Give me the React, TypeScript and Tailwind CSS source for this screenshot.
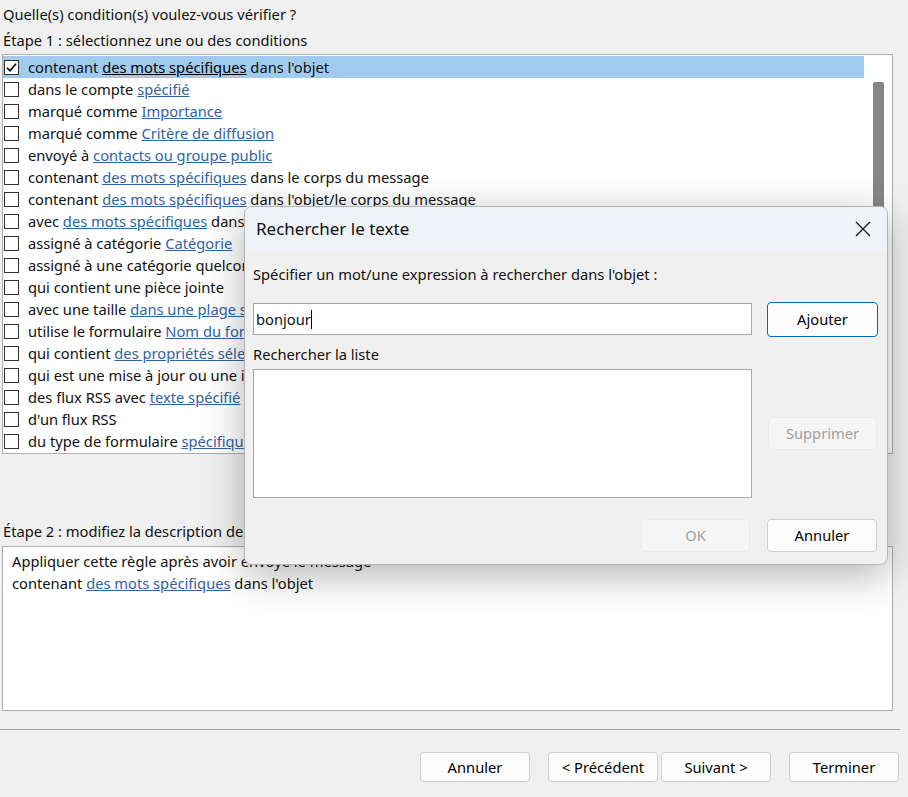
import React from "react";

type Part = string | { link: string };

const conditions: Part[][] = [
  ["contenant ", { link: "des mots spécifiques" }, " dans l'objet"],
  ["dans le compte ", { link: "spécifié" }],
  ["marqué comme ", { link: "Importance" }],
  ["marqué comme ", { link: "Critère de diffusion" }],
  ["envoyé à ", { link: "contacts ou groupe public" }],
  ["contenant ", { link: "des mots spécifiques" }, " dans le corps du message"],
  ["contenant ", { link: "des mots spécifiques" }, " dans l'objet/le corps du message"],
  ["avec ", { link: "des mots spécifiques" }, " dans l'en-tête du message"],
  ["assigné à catégorie ", { link: "Catégorie" }],
  ["assigné à une catégorie quelconque"],
  ["qui contient une pièce jointe"],
  ["avec une taille ", { link: "dans une plage spécifiée" }],
  ["utilise le formulaire ", { link: "Nom du formulaire" }],
  ["qui contient ", { link: "des propriétés sélectionnées" }, " du document"],
  ["qui est une mise à jour ou une invitation à une réunion"],
  ["des flux RSS avec ", { link: "texte spécifié" }, " dans le titre"],
  ["d'un flux RSS"],
  ["du type de formulaire ", { link: "spécifique" }],
];

function Text({ parts, selected }: { parts: Part[]; selected?: boolean }) {
  return (
    <>
      {parts.map((p, i) =>
        typeof p === "string" ? (
          <span key={i}>{p}</span>
        ) : (
          <span
            key={i}
            className={selected ? "underline text-black" : "underline text-[#3063a3]"}
          >
            {p.link}
          </span>
        )
      )}
    </>
  );
}

function ConditionRow({ parts, selected }: { parts: Part[]; selected?: boolean }) {
  return (
    <div
      className={
        "h-[22px] flex items-center whitespace-nowrap " +
        (selected ? "bg-[#a0cbef]" : "")
      }
    >
      <div className="ml-[1px] w-[15px] h-[15px] border border-[#333] bg-white flex items-center justify-center shrink-0">
        {selected && (
          <svg width="13" height="13" viewBox="0 0 13 13">
            <path d="M2 6.8 L5 9.8 L11 2.8" fill="none" stroke="#000" strokeWidth="1.6" />
          </svg>
        )}
      </div>
      <span className="ml-[9px]">
        <Text parts={parts} selected={selected} />
      </span>
    </div>
  );
}

function WinButton({
  children,
  className = "",
  disabled,
  focused,
}: {
  children: React.ReactNode;
  className?: string;
  disabled?: boolean;
  focused?: boolean;
}) {
  const tone = disabled
    ? "bg-[#f5f5f5] border-[#ebebeb] text-[#a0a0a0]"
    : focused
    ? "bg-[#fdfdfd] border-[#0067c0] text-black"
    : "bg-[#fdfdfd] border-[#d0d0d0] text-black";
  return (
    <div
      className={
        "flex items-center justify-center rounded-[4px] border shrink-0 " + tone + " " + className
      }
    >
      {children}
    </div>
  );
}

function SearchDialog() {
  return (
    <div className="absolute left-[244px] top-[206px] w-[644px] h-[359px] rounded-[8px] border border-[#b4b4b4] bg-[#f0f0f0] shadow-[0_10px_40px_rgba(0,0,0,0.30)] overflow-hidden">
      <div className="h-[44px] bg-[#eff3f8] flex items-center justify-between pl-[11px] pr-[16px]">
        <span className="text-[17px]">Rechercher le texte</span>
        <svg width="16" height="16" viewBox="0 0 16 16">
          <path d="M1 1 L15 15 M15 1 L1 15" stroke="#1a1a1a" strokeWidth="1.3" fill="none" />
        </svg>
      </div>
      <div className="pl-[8px] pt-[12px]">
        <div className="h-[22px] leading-[22px]">
          Spécifier un mot/une expression à rechercher dans l'objet :
        </div>
        <div className="mt-[17px] flex items-start">
          <div className="mt-[1px] w-[499px] h-[32px] bg-white border border-[#a8a8a8] flex items-center pl-[2px]">
            <span>bonjour</span>
            <span className="w-px h-[19px] bg-black" />
          </div>
          <WinButton focused className="ml-[15px] w-[111px] h-[35px]">
            Ajouter
          </WinButton>
        </div>
        <div className="mt-[6px] h-[22px] leading-[22px]">Rechercher la liste</div>
        <div className="mt-[4px] flex items-center">
          <div className="w-[499px] h-[129px] bg-white border border-[#a8a8a8]" />
          <WinButton disabled className="ml-[16px] w-[109px] h-[33px]">
            Supprimer
          </WinButton>
        </div>
        <div className="mt-[21px] flex">
          <WinButton disabled className="ml-[388px] w-[109px] h-[33px]">
            OK
          </WinButton>
          <WinButton className="ml-[17px] w-[110px] h-[33px]">Annuler</WinButton>
        </div>
      </div>
    </div>
  );
}

export default function App() {
  return (
    <div
      className="relative w-[908px] h-[797px] overflow-hidden bg-[#f0f0f0] text-[14.7px] text-[#111]"
      style={{ fontFamily: '"Noto Sans", "Open Sans", sans-serif' }}
    >
      <div className="pt-[3px]">
        <p className="h-[22px] leading-[22px] pl-[3px]">
          Quelle(s) condition(s) voulez-vous vérifier ?
        </p>
        <p className="mt-[4px] h-[22px] leading-[22px] pl-[3px]">
          Étape 1 : sélectionnez une ou des conditions
        </p>

        <div className="mt-[3px] ml-[2px] w-[891px] h-[400px] bg-white border border-[#adadad] flex overflow-hidden">
          <div className="w-[861px] pt-[1px] overflow-hidden">
            {conditions.map((c, i) => (
              <ConditionRow key={i} parts={c} selected={i === 0} />
            ))}
          </div>
          <div className="flex-1 flex justify-center pt-[27px]">
            <div className="w-[11px] h-[260px] bg-[#868686] rounded-[2px]" />
          </div>
        </div>

        <p className="mt-[66px] h-[22px] leading-[22px] pl-[3px]">
          Étape 2 : modifiez la description de la règle (cliquez sur une valeur soulignée)
        </p>
        <div className="mt-[4px] ml-[2px] w-[891px] h-[165px] bg-white border border-[#adadad] pt-[3px] pl-[9px]">
          <div className="h-[22px] leading-[22px]">
            Appliquer cette règle après avoir envoyé le message
          </div>
          <div className="h-[22px] leading-[22px]">
            <Text parts={["contenant ", { link: "des mots spécifiques" }, " dans l'objet"]} />
          </div>
        </div>

        <div className="mt-[18px] w-[900px] h-px bg-[#a0a0a0]" />

        <div className="mt-[22px] flex">
          <WinButton className="ml-[420px] w-[110px] h-[30px]">Annuler</WinButton>
          <WinButton className="ml-[18px] w-[110px] h-[30px]">&lt; Précédent</WinButton>
          <WinButton className="ml-[3px] w-[110px] h-[30px]">Suivant &gt;</WinButton>
          <WinButton className="ml-[18px] w-[110px] h-[30px]">Terminer</WinButton>
        </div>
      </div>

      <SearchDialog />
    </div>
  );
}
